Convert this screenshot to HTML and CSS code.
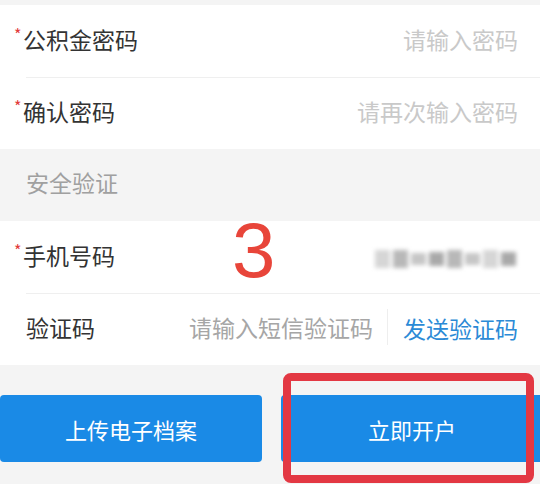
FILE: index.html
```html
<!DOCTYPE html>
<html lang="zh-CN">
<head>
  <meta charset="UTF-8">
  <meta name="viewport" content="width=device-width, initial-scale=1.0">
  <title>公积金开户</title>
  <link rel="stylesheet" href="styles.css">
</head>
<body>

  <div class="top-gap"></div>

  <!-- 密码 -->
  <section class="group">
    <div class="row">
      <span class="label req">公积金密码</span>
      <input class="field" type="password" placeholder="请输入密码">
    </div>
    <div class="row">
      <span class="label req">确认密码</span>
      <input class="field" type="password" placeholder="请再次输入密码">
    </div>
  </section>

  <h2 class="group-title">安全验证</h2>

  <!-- 安全验证 -->
  <section class="group">
    <div class="row">
      <span class="label req">手机号码</span>
      <span class="phone">
        <i class="b1"></i><i class="b2"></i><i class="b3"></i><i class="b4"></i><i class="b2"></i><i class="b3"></i><i class="b1"></i><i class="b4"></i>
      </span>
    </div>
    <div class="row">
      <span class="label">验证码</span>
      <input class="field code" type="text" placeholder="请输入短信验证码">
      <button class="send">发送验证码</button>
    </div>
  </section>

  <div class="actions">
    <button class="btn">上传电子档案</button>
    <button class="btn">立即开户</button>
  </div>

  <!-- 标注 -->
  <div class="mark-num">3</div>
  <div class="mark-box"></div>

</body>
</html>
```

FILE: styles.css
```css
body {
  margin: 0;
  width: 540px;
  height: 484px;
  overflow: hidden;
  position: relative;
  background: #f4f4f4;
  font-family: "Noto Sans CJK SC", "Noto Sans", sans-serif;
  color: #333;
}

.top-gap {
  height: 5px;
}

.group {
  background: #fff;
}

.row {
  display: flex;
  align-items: center;
  box-sizing: border-box;
  height: 73px;
  padding-bottom: 5px;
  margin-left: 26px;
  padding-right: 22px;
  border-bottom: 1px solid #efefef;
}

.row:last-child {
  border-bottom: none;
  height: 71px;
}

.label {
  font-size: 23px;
  white-space: nowrap;
}

.req::before {
  content: "*";
  display: inline-block;
  width: 9px;
  margin-left: -12px;
  color: #e23a3a;
  font-size: 16px;
  vertical-align: top;
  line-height: 24px;
}

.field {
  flex: 1;
  min-width: 0;
  border: none;
  outline: none;
  background: none;
  padding: 0;
  font: inherit;
  font-size: 23px;
  text-align: right;
  color: #333;
}

.field::placeholder {
  color: #c9c9c9;
}

.field.code {
  text-align: left;
  margin-left: 94px;
}

.field.code::placeholder {
  color: #a6a6a6;
}

.send {
  border: none;
  border-left: 1px solid #eee;
  background: none;
  padding: 2px 0 2px 15px;
  height: 36px;
  font: inherit;
  font-size: 23px;
  color: #2b8ad6;
}

.group-title {
  margin: 0;
  box-sizing: border-box;
  height: 72px;
  line-height: 66px;
  padding-left: 26px;
  font-size: 23px;
  font-weight: normal;
  color: #a0a0a0;
}

.phone {
  margin-left: auto;
  margin-right: 2px;
  display: flex;
  align-items: center;
  height: 24px;
  margin-top: 8px;
  filter: blur(2px);
}

.phone i {
  display: block;
  width: 15px;
  height: 18px;
  margin-left: 3px;
}

.phone .b1 { background: #d6d6d6; }
.phone .b2 { background: #b8b8b8; }
.phone .b3 { background: #c6c6c6; height: 12px; }
.phone .b4 { background: #a9a9a9; height: 14px; }

.actions {
  display: flex;
  gap: 19px;
  padding-top: 30px;
}

.btn {
  flex: none;
  width: 262px;
  height: 67px;
  border: none;
  border-radius: 4px;
  background: #1a8ae6;
  color: #fff;
  font: inherit;
  font-size: 22px;
}

.mark-num {
  position: absolute;
  left: 232px;
  top: 211px;
  font-family: "Liberation Sans", Arial, sans-serif;
  font-size: 78px;
  line-height: 78px;
  color: #e8453a;
}

.mark-box {
  position: absolute;
  left: 283px;
  top: 373px;
  width: 235px;
  height: 94px;
  border: 8px solid #e33843;
  border-radius: 8px;
}
```
